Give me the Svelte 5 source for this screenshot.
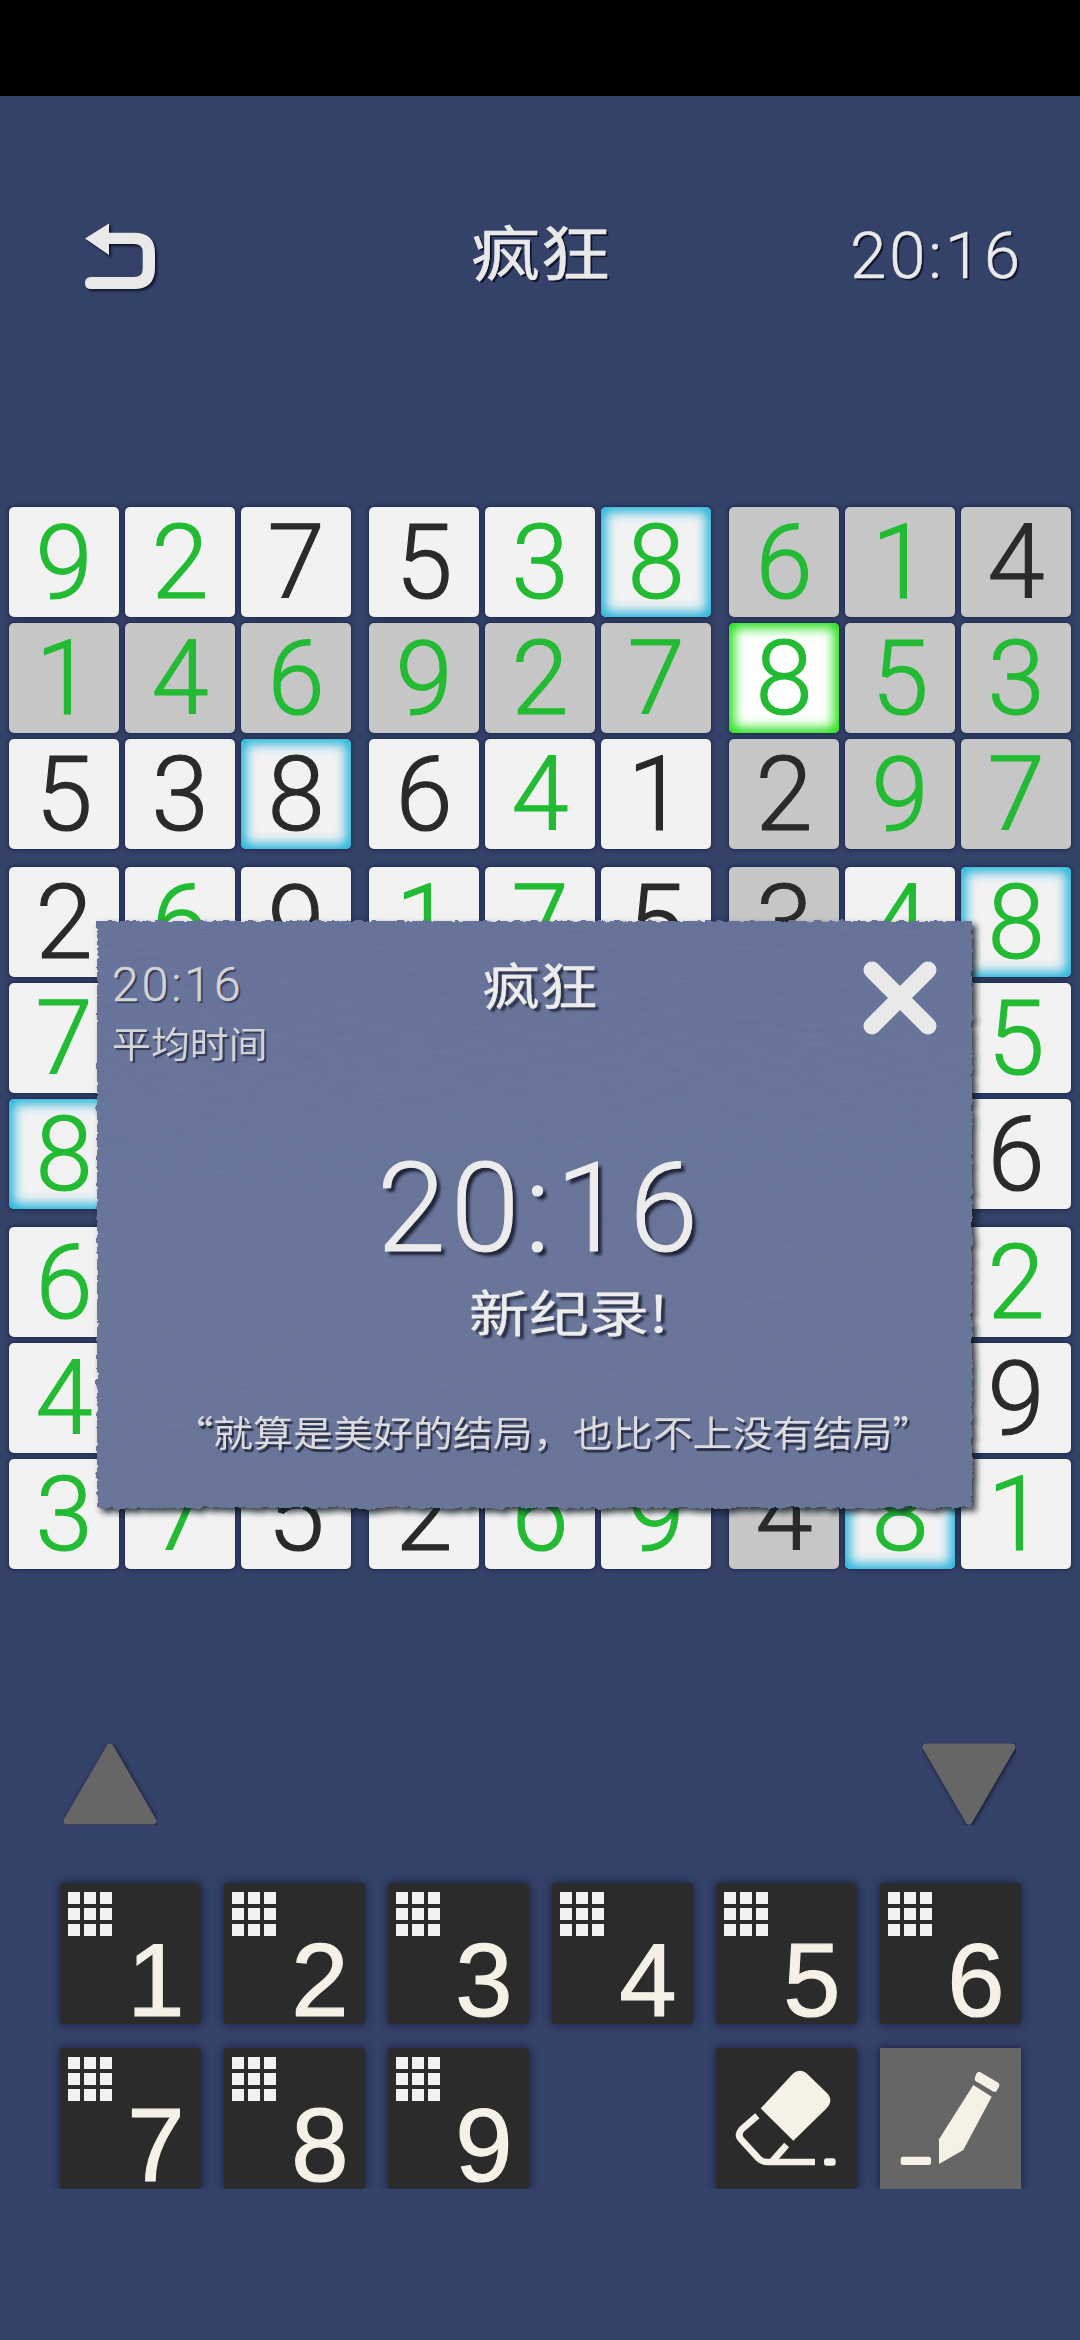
<script>
  const given = [
    [[9,1],[2,1],[7,0],[5,0],[3,1],[8,1,'b'],[6,1,'g'],[1,1,'g'],[4,0,'g']],
    [[1,1,'g'],[4,1,'g'],[6,1,'g'],[9,1,'g'],[2,1,'g'],[7,1,'g'],[8,1,'s'],[5,1,'g'],[3,1,'g']],
    [[5,0],[3,0],[8,0,'b'],[6,0],[4,1],[1,0],[2,0,'g'],[9,1,'g'],[7,1,'g']],
    [[2,0],[6,1],[9,0],[1,1],[7,1],[5,0],[3,0,'g'],[4,1],[8,1,'b']],
    [[7,1],['',0],['',0],['',0],['',0],['',0],['',0,'g'],['',0],[5,1]],
    [[8,1,'b'],['',0],['',0],['',0],['',0],['',0],['',0,'g'],['',0],[6,0]],
    [[6,1],['',0],['',0],['',0],['',0],['',0],['',0,'g'],['',0],[2,1]],
    [[4,1],['',0],['',0],['',0],['',0],['',0],['',0,'g'],['',0],[9,0]],
    [[3,1],[7,1],[5,0],[2,0],[6,1],[9,1],[4,0,'g'],[8,1,'b'],[1,1]]
  ];
  const blocks = [];
  for (let r = 0; r < 3; r++) for (let c = 0; c < 3; c++) {
    const cells = [];
    for (let i = 0; i < 3; i++) for (let j = 0; j < 3; j++) cells.push(given[r*3+i][c*3+j]);
    blocks.push(cells);
  }
  const keys = [1,2,3,4,5,6,7,8,9];
</script>

<div class="status"></div>

<header class="header">
  <svg class="back" viewBox="0 0 74 67" width="74" height="67" aria-hidden="true">
    <path d="M25 0.5 L1 15.5 L25 32 L25 21 L50 21 Q58.7 21 58.7 29 L58.7 46 Q58.7 54 50 54 L7 54 Q1 54 1 60 Q1 66 7 66 L50 66 Q71 66 71 45 L71 30 Q71 9.7 50 9.7 L25 9.7 Z"/>
  </svg>
  <div class="title cjk">疯狂</div>
  <div class="clock">20:16</div>
</header>

<main class="board">
  {#each blocks as cells}
    <div class="block">
      {#each cells as cell}
        <div class="cell {cell[2] ?? ''}" class:ok={cell[1]}>{cell[0]}</div>
      {/each}
    </div>
  {/each}
</main>

<div class="arrows">
  <svg viewBox="0 0 94 82" width="94" height="82" aria-hidden="true"><path class="tri" d="M47 4 L90 78 L4 78 Z"/></svg>
  <svg viewBox="0 0 94 82" width="94" height="82" aria-hidden="true"><path class="tri" d="M4 4 L90 4 L47 78 Z"/></svg>
</div>

<div class="keys">
  {#each keys as k}
    <button class="key">
      <span class="mini">{#each keys as _}<i></i>{/each}</span>
      <span class="num">{k}</span>
    </button>
  {/each}
  <button class="key eraser">
    <svg viewBox="108 984 423 423" width="141" height="141" aria-hidden="true">
      <path class="cream" d="M242 1165 L335 1065 Q360 1040 385 1065 L440 1118 Q462 1140 440 1165 L340 1262 Z"/>
      <path class="line" d="M232 1187 L185 1228 Q170 1245 185 1260 L235 1315 Q245 1326 262 1326 L405 1326 M320 1275 L278 1322"/>
      <rect class="cream" x="432" y="1315" width="35" height="22" rx="8"/>
    </svg>
  </button>
  <button class="key pen">
    <svg viewBox="600 984 423 423" width="141" height="141" aria-hidden="true">
      <path class="cream" d="M880 1095 L935 1130 L850 1290 L777 1332 L777 1258 Z"/>
      <path class="cream" d="M900 1056 L955 1088 Q960 1092 957 1100 L950 1112 Q946 1118 938 1114 L888 1084 Q882 1080 885 1072 L890 1060 Q894 1053 900 1056 Z"/>
      <rect class="cream" x="662" y="1310" width="91" height="25" rx="7"/>
    </svg>
  </button>
</div>

<svg class="defs" width="0" height="0" aria-hidden="true">
  <filter id="torn" x="-3%" y="-3%" width="106%" height="106%">
    <feTurbulence type="fractalNoise" baseFrequency="0.12" numOctaves="3" seed="4" result="n"/>
    <feDisplacementMap in="SourceGraphic" in2="n" scale="6" xChannelSelector="R" yChannelSelector="G" result="d"/>
    <feTurbulence type="fractalNoise" baseFrequency="0.03 0.7" numOctaves="2" seed="8" result="grain"/>
    <feColorMatrix in="grain" type="matrix" values="0 0 0 0 0.2  0 0 0 0 0.24  0 0 0 0 0.36  0 0 0 0.28 -0.08" result="tint"/>
    <feComposite in="tint" in2="d" operator="in" result="tex"/>
    <feMerge result="m"><feMergeNode in="d"/><feMergeNode in="tex"/></feMerge>
    <feDropShadow in="m" dx="4" dy="4" stdDeviation="3" flood-color="#10131f" flood-opacity="0.85"/>
  </filter>
</svg>

<section class="modal">
  <div class="paper"></div>
  <div class="top">
    <div class="avg">
      <div class="avg-time">20:16</div>
      <div class="avg-label cjk">平均时间</div>
    </div>
    <div class="m-title cjk">疯狂</div>
    <svg class="close" viewBox="0 0 76 76" width="76" height="76" aria-hidden="true">
      <path d="M10 10 L66 66 M66 10 L10 66"/>
    </svg>
  </div>
  <div class="big">20:16</div>
  <div class="record cjk">新纪录!</div>
  <div class="quote cjk">“就算是美好的结局，也比不上没有结局”</div>
</section>

<style>
  :global(body) {
    margin: 0;
    background: #344168;
    font-family: Roboto, "Noto Sans CJK SC", sans-serif;
  }
  .status { height: 96px; background: #000; }
  .cjk { font-family: "Noto Sans CJK SC", sans-serif; }

  .header {
    height: 320px;
    margin-bottom: 91px;
    padding: 0 57px 0 84px;
    display: grid;
    grid-template-columns: 215px 1fr 215px;
    align-items: center;
    color: #e9e9ea;
  }
  .back { display: block; filter: drop-shadow(2px 2px 1px #10152a); }
  .back path { fill: #e9e9ea; }
  .title {
    font-size: 60px;
    line-height: 1;
    text-align: center;
    transform: translate(-13px, -6px) scaleX(1.16);
    -webkit-text-stroke: 0.6px #e9e9ea;
    text-shadow: 2px 2px 0 #10152a;
  }
  .clock {
    justify-self: end;
    font-size: 65px;
    font-weight: 300;
    letter-spacing: 3px;
    line-height: 1;
    -webkit-text-stroke: 0.6px #e9e9ea;
    text-shadow: 2px 2px 1px #10152a;
  }

  .board {
    display: grid;
    grid-template-columns: repeat(3, 342px);
    gap: 18px;
    padding-left: 9px;
  }
  .block {
    display: grid;
    grid-template-columns: repeat(3, 110px);
    grid-auto-rows: 110px;
    gap: 6px;
  }
  .cell {
    display: flex;
    align-items: center;
    justify-content: center;
    border-radius: 5px;
    background: #f3f2f3;
    color: #2a2a2a;
    font-size: 103px;
    font-weight: 300;
    -webkit-text-stroke: 1.2px currentColor;
    line-height: 1;
    box-shadow: 0 0 4px #10183a;
  }
  .ok { color: #22bb33; }
  .g { background: #c6c6c7; }
  .b { box-shadow: 0 0 4px #10183a, inset 0 0 12px 5px #1fb3da; background: #f3f2f3; }
  .s { box-shadow: 0 0 4px #10183a, inset 0 0 12px 5px #1ee010; background: #fff; }

  .arrows {
    margin-top: 174px;
    padding: 0 64px 0 63px;
    display: flex;
    justify-content: space-between;
  }
  .arrows svg { display: block; }
  .tri {
    fill: #666;
    stroke: #666;
    stroke-width: 7;
    stroke-linejoin: round;
    filter: drop-shadow(1px 1px 2px #10152a);
  }

  .keys {
    margin-top: 58px;
    padding-left: 60px;
    display: grid;
    grid-template-columns: repeat(6, 141px);
    grid-auto-rows: 141px;
    column-gap: 23px;
    row-gap: 24px;
  }
  .key {
    position: relative;
    padding: 0;
    border: 0;
    border-radius: 4px;
    background: #2b2b2b;
    color: #f5f1e6;
    box-shadow: 0 0 8px #141c3c;
    display: block;
  }
  .mini {
    position: absolute;
    left: 8px;
    top: 9px;
    display: grid;
    grid-template-columns: repeat(3, 12px);
    grid-auto-rows: 12px;
    gap: 4px;
  }
  .mini i { background: #f3f2f3; }
  .num {
    position: absolute;
    left: 96px;
    top: 97px;
    transform: translate(-50%, -50%);
    font-size: 103px;
    font-weight: 300;
    -webkit-text-stroke: 1.2px currentColor;
    line-height: 1;
  }
  .eraser { grid-column: 5; }
  .pen { grid-column: 6; background: #666; border-radius: 0; }
  .key svg { display: block; }
  .cream { fill: #f5f1e6; }
  .line { fill: none; stroke: #f5f1e6; stroke-width: 20; }

  .defs { position: absolute; }
  .modal {
    position: absolute;
    left: 97px;
    top: 921px;
    width: 875px;
    height: 587px;
    box-sizing: border-box;
    padding: 40px 4px 0 15px;
    color: #ececec;
  }
  .paper {
    position: absolute;
    inset: 0;
    background: linear-gradient(#66729a, #69759a 60%, #687499);
    filter: url(#torn);
  }
  .top, .big, .record, .quote { position: relative; }
  .top {
    display: grid;
    grid-template-columns: 1fr auto 1fr;
    align-items: start;
  }
  .avg { color: #d4d4d6; }
  .avg-time {
    font-size: 48px;
    font-weight: 300;
    letter-spacing: 3px;
    line-height: 1;
    -webkit-text-stroke: 0.5px #d4d4d6;
    text-shadow: 2px 2px 1px #333a55;
  }
  .avg-label {
    margin-top: 14px;
    font-size: 36px;
    line-height: 1.1;
    transform: scaleX(1.08);
    transform-origin: left;
    white-space: nowrap;
    text-shadow: 2px 2px 1px #333a55;
  }
  .m-title {
    font-size: 50px;
    line-height: 1;
    margin-top: -3px;
    transform: scaleX(1.15);
    -webkit-text-stroke: 0.5px #ececec;
    text-shadow: 3px 3px 2px #2a2f45;
  }
  .close {
    justify-self: end;
    margin: -1px 30px 0 0;
  }
  .close path {
    fill: none;
    stroke: #e9e9ea;
    stroke-width: 17;
    stroke-linecap: round;
  }
  .big {
    margin-top: 84px;
    text-align: center;
    font-size: 124px;
    font-weight: 300;
    letter-spacing: 5px;
    line-height: 1;
    -webkit-text-stroke: 1px #ececec;
    text-shadow: 4px 4px 3px #20253a;
  }
  .record {
    margin-top: 9px;
    padding-left: 48px;
    text-align: center;
    font-size: 50px;
    line-height: 1.2;
    transform: scaleX(1.2);
    -webkit-text-stroke: 0.3px #ececec;
    text-shadow: 3px 3px 2px #2a2f45;
  }
  .quote {
    margin-top: 72px;
    text-align: center;
    padding-left: 23px;
    white-space: nowrap;
    font-size: 36px;
    line-height: 1.1;
    transform: scaleX(1.11);
    color: #dcdcde;
    text-shadow: 2px 3px 1px #2a2f45;
  }
</style>
